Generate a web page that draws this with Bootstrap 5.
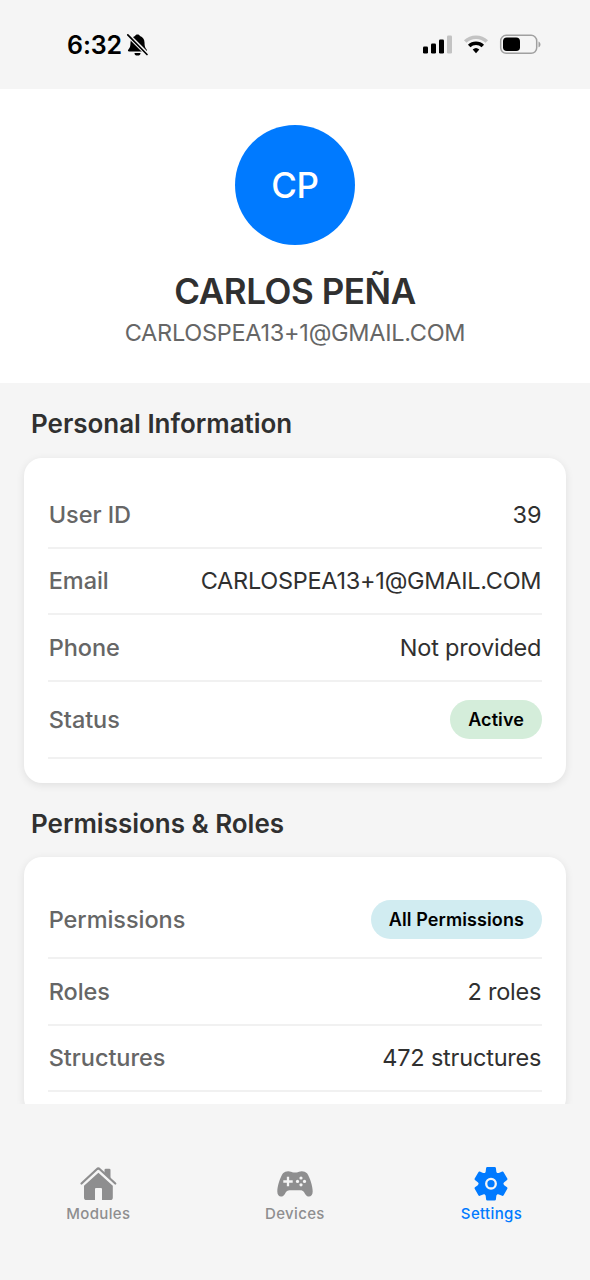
<!DOCTYPE html>
<html lang="en">
<head>
<meta charset="utf-8">
<meta name="viewport" content="width=device-width, initial-scale=1">
<title>Settings</title>
<link href="https://cdn.jsdelivr.net/npm/bootstrap@5.3.0/dist/css/bootstrap.min.css" rel="stylesheet">
<style>
  body { font-family: Inter, "Liberation Sans", sans-serif; background: #f5f5f5; color: #303030; height: 1280px; overflow: hidden; }
  .status-bar { height: 89px; padding: 0 49px 0 67px; }
  .clock { font-size: 25px; font-weight: 600; color: #000; letter-spacing: -.1px; line-height: 30px; }
  .profile { height: 294px; padding-top: 36px; }
  .avatar { width: 120px; height: 120px; background: #007aff; font-size: 35px; font-weight: 500; letter-spacing: -.3px; }
  .full-name { font-size: 35px; font-weight: 600; line-height: 42px; margin: 25px 0 0; letter-spacing: -.45px; }
  .mail { font-size: 23.5px; line-height: 29px; color: #666; margin-top: 6px; letter-spacing: -.27px; }
  .scroll-area { height: 1015px; overflow: hidden; }
  .section-title { font-size: 26px; font-weight: 600; line-height: 32px; padding: 25px 31px 0; height: 75px; margin: 0; letter-spacing: -.02px; }
  .panel + .section-title { height: 74px; }
  .panel { background: #fff; border-radius: 18px; margin: 0 24px; padding: 24px; box-shadow: 0 2px 9px rgba(0,0,0,.09); }
  .info-row { height: 66.6px; border-bottom: 2px solid #f1f1f1; font-size: 23.5px; line-height: 29px; }
  .info-row.tall { height: 77.6px; }
  .info-label { color: #666; font-weight: 450; padding-left: .7px; letter-spacing: -.05px; }
  .info-value { padding-right: .7px; letter-spacing: -.2px; }
  .info-value.address { letter-spacing: -.27px; }
  .pill { font-size: 18px; font-weight: 600; line-height: 21px; color: #000; padding: 9px 18px; border-radius: 20px; height: 39px; letter-spacing: .1px; }
  .pill-green { background: #d4edda; }
  .pill-cyan { background: #d1ecf1; }
  .tab-bar { height: 176px; padding-top: 60px; }
  .tab-item { width: 196.6px; color: #8e8e8f; font-size: 15px; font-weight: 500; line-height: 18px; letter-spacing: .35px; }
  .tab-item svg { margin-bottom: 1px; }
  .tab-item.current { color: #007aff; }
</style>
</head>
<body>
<div class="app-screen">
  <header class="status-bar d-flex align-items-center justify-content-between">
    <div class="d-flex align-items-center">
      <span class="clock">6:32</span>
      <svg class="ms-1" width="23" height="24" viewBox="0 0 23 24">
        <path d="M11.500 1.500c-1.300 0-2.200.7-2.500 1.600C6.200 4 4.500 6.500 4.500 9.500c0 4-.7 5.500-2.100 7-.9 1-.4 2 .8 2h16.600c1.200 0 1.700-1 .8-2-1.400-1.500-2.100-3-2.100-7 0-3-1.700-5.500-4.500-6.400-.3-.9-1.200-1.600-2.500-1.600zM8.500 20a3 2.600 0 0 0 6 0z"/>
        <path d="M1.500 1.500L21.500 21.500" stroke="#f5f5f5" stroke-width="4"/>
        <path d="M1.800 1.800L21 21.500" stroke="#000" stroke-width="1.700" stroke-linecap="round"/>
      </svg>
    </div>
    <div class="d-flex align-items-center">
      <svg width="118" height="22" viewBox="0 0 118 22">
        <g>
          <rect x="0" y="12.500" width="5" height="7" rx="1.300"/>
          <rect x="8" y="9.500" width="5" height="10" rx="1.300"/>
          <rect x="16" y="5.500" width="5" height="14" rx="1.300"/>
          <rect x="24" y="1.500" width="5" height="18" rx="1.300" fill="#c3c3c3"/>
        </g>
        <g fill="none" stroke-width="3.500">
          <path d="M42.200 7.600a15.400 15.400 0 0 1 21.600 0" stroke="#c3c3c3"/>
          <path d="M46.200 12a9.700 9.700 0 0 1 13.600 0" stroke="#000"/>
        </g>
        <path d="M49.700 15.600a4.800 4.800 0 0 1 6.600 0L53 19.200z"/>
        <rect x="77.700" y="1.300" width="36" height="18" rx="5.500" fill="none" stroke="#a0a0a0" stroke-width="1.500"/>
        <rect x="80" y="3.500" width="17" height="13.600" rx="3.800"/>
        <path d="M115.500 7.500c2.600 1 2.600 4.800 0 5.800z" fill="#a0a0a0"/>
      </svg>
    </div>
  </header>
  <main class="scroll-area">
    <section class="profile bg-white d-flex flex-column align-items-center">
      <div class="avatar rounded-circle text-white d-flex align-items-center justify-content-center">CP</div>
      <h1 class="full-name">CARLOS PEÑA</h1>
      <div class="mail">CARLOSPEA13+1@GMAIL.COM</div>
    </section>
    <h2 class="section-title">Personal Information</h2>
    <section class="panel">
      <div class="info-row d-flex align-items-center justify-content-between"><span class="info-label">User ID</span><span class="info-value">39</span></div>
      <div class="info-row d-flex align-items-center justify-content-between"><span class="info-label">Email</span><span class="info-value address">CARLOSPEA13+1@GMAIL.COM</span></div>
      <div class="info-row d-flex align-items-center justify-content-between"><span class="info-label">Phone</span><span class="info-value">Not provided</span></div>
      <div class="info-row tall d-flex align-items-center justify-content-between"><span class="info-label">Status</span><span class="pill pill-green">Active</span></div>
    </section>
    <h2 class="section-title">Permissions &amp; Roles</h2>
    <section class="panel">
      <div class="info-row tall d-flex align-items-center justify-content-between"><span class="info-label">Permissions</span><span class="pill pill-cyan">All Permissions</span></div>
      <div class="info-row d-flex align-items-center justify-content-between"><span class="info-label">Roles</span><span class="info-value">2 roles</span></div>
      <div class="info-row d-flex align-items-center justify-content-between"><span class="info-label">Structures</span><span class="info-value">472 structures</span></div>
    </section>
  </main>
  <nav class="tab-bar d-flex">
    <div class="tab-item d-flex flex-column align-items-center">
      <svg width="40" height="40" viewBox="0 0 40 40" fill="currentColor">
        <path d="M26.500 6q0-1.300 1.300-1.300h3.400q1.300 0 1.300 1.300V15.500l-6-5.500z"/>
        <path d="M3.500 19.500L18.800 5.200q1.500-1.400 3 0L37.300 19.500" fill="none" stroke="currentColor" stroke-width="2.200" stroke-linecap="round"/>
        <path d="M20.400 8.700L34.800 21.800V33.500q0 2.600-2.600 2.600H24V25q0-1-1-1h-5q-1 0-1 1V36.100H8.600q-2.600 0-2.600-2.600V21.800z"/>
      </svg>
      <span>Modules</span>
    </div>
    <div class="tab-item d-flex flex-column align-items-center">
      <svg width="40" height="40" viewBox="0 0 40 40" fill="currentColor">
        <path d="M8 9.200C10 7.300 13.500 6.600 16 7.800q1.200.6 2.500.6h3q1.300 0 2.500-.6c2.500-1.200 6-.5 8 1.400 3 4.500 5.700 12.500 5.700 18.300 0 6-5.400 6.400-7.600 2.500-1.800-3.200-2.800-3.700-5.600-3.700h-9c-2.800 0-3.800.5-5.600 3.700-2.200 3.900-7.600 3.500-7.600-2.500C2.300 21.700 5 13.700 8 9.200z"/>
        <path d="M13 12.800v9.400M8.300 17.500h9.400" stroke="#f5f5f5" stroke-width="2.300"/>
        <g fill="#f5f5f5"><circle cx="26" cy="14" r="1.600"/><circle cx="26" cy="20.800" r="1.600"/><circle cx="22.500" cy="17.400" r="1.600"/><circle cx="29.500" cy="17.400" r="1.600"/></g>
      </svg>
      <span>Devices</span>
    </div>
    <div class="tab-item current d-flex flex-column align-items-center">
      <svg width="40" height="40" viewBox="-20 -19.700 40 40" fill="currentColor">
        <defs><path id="tooth" d="M-7.200-9L-5.900-11Q-5.500-11.500-5.300-12.200L-4.900-15.700Q-4.700-16.700-3.700-16.700H3.700Q4.700-16.700 4.900-15.700L5.300-12.200Q5.500-11.500 5.900-11L7.200-9z"/></defs>
        <circle r="12"/>
        <use href="#tooth"/><use href="#tooth" transform="rotate(60)"/><use href="#tooth" transform="rotate(120)"/>
        <use href="#tooth" transform="rotate(180)"/><use href="#tooth" transform="rotate(240)"/><use href="#tooth" transform="rotate(300)"/>
        <circle r="4.800" fill="none" stroke="#f5f5f5" stroke-width="2.300"/>
      </svg>
      <span>Settings</span>
    </div>
  </nav>
</div>
<script src="https://cdn.jsdelivr.net/npm/bootstrap@5.3.0/dist/js/bootstrap.bundle.min.js"></script>
</body>
</html>
